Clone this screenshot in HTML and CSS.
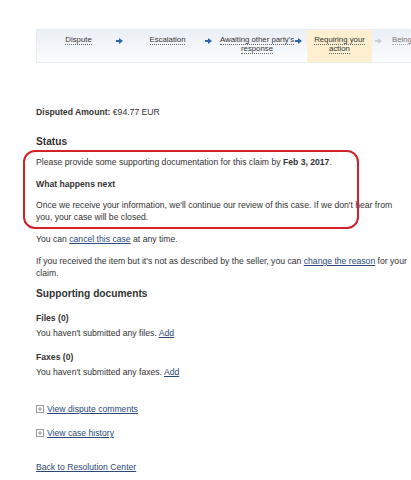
FILE: index.html
```html
<!DOCTYPE html>
<html>
<head>
    <title>Case Details</title>
    <meta name="viewport" content="width=device-width, initial-scale=1.0">
    <link rel="stylesheet" href="styles.css">
</head>
<body>
    <div class="page">
        <div class="steps">
            <div class="step step-dispute"><span class="step-label">Dispute</span></div>
            <div class="step-arrow">
                <svg width="7" height="6" viewBox="0 0 7 6"><path d="M0 2H3V0L7 3L3 6V4H0Z"/></svg>
            </div>
            <div class="step step-escalation"><span class="step-label">Escalation</span></div>
            <div class="step-arrow">
                <svg width="7" height="6" viewBox="0 0 7 6"><path d="M0 2H3V0L7 3L3 6V4H0Z"/></svg>
            </div>
            <div class="step step-awaiting"><span class="step-label">Awaiting other party's<br>response</span></div>
            <div class="step-arrow">
                <svg width="7" height="6" viewBox="0 0 7 6"><path d="M0 2H3V0L7 3L3 6V4H0Z"/></svg>
            </div>
            <div class="step step-current"><span class="step-label">Requiring your<br>action</span></div>
            <div class="step-arrow muted">
                <svg width="7" height="6" viewBox="0 0 7 6"><path d="M0 2H3V0L7 3L3 6V4H0Z"/></svg>
            </div>
            <div class="step step-next"><span class="step-label">Being resolved</span></div>
        </div>

        <p class="amount"><b>Disputed Amount:</b> €94.77 EUR</p>

        <h2 class="section-title status-title">Status</h2>

        <!-- highlighted notice -->
        <div class="notice">
            <p class="notice-deadline">Please provide some supporting documentation for this claim by <b>Feb 3, 2017</b>.</p>
            <h3 class="notice-title">What happens next</h3>
            <p class="notice-text">Once we receive your information, we'll continue our review of this case. If we don't hear from you, your case will be closed.</p>
        </div>

        <p class="note">You can <a href="#">cancel this case</a> at any time.</p>
        <p class="note">If you received the item but it's not as described by the seller, you can <a href="#">change the reason</a> for your claim.</p>

        <h2 class="section-title docs-title">Supporting documents</h2>

        <div class="doc-group">
            <h4 class="doc-label">Files (0)</h4>
            <p class="doc-text">You haven't submitted any files. <a href="#">Add</a></p>
        </div>
        <div class="doc-group">
            <h4 class="doc-label">Faxes (0)</h4>
            <p class="doc-text">You haven't submitted any faxes. <a href="#">Add</a></p>
        </div>

        <ul class="toggles">
            <li>
                <svg class="expand-icon" width="8" height="8" viewBox="0 0 8 8"><rect x="0.5" y="0.5" width="7" height="7"/><path d="M2 4H6M4 2V6"/></svg>
                <a href="#">View dispute comments</a>
            </li>
            <li>
                <svg class="expand-icon" width="8" height="8" viewBox="0 0 8 8"><rect x="0.5" y="0.5" width="7" height="7"/><path d="M2 4H6M4 2V6"/></svg>
                <a href="#">View case history</a>
            </li>
        </ul>

        <a href="#" class="back-link">Back to Resolution Center</a>
    </div>
</body>
</html>
```

FILE: styles.css
```css
* {
    box-sizing: border-box;
}

body {
    margin: 0;
    background: #fff;
    color: #333;
    font-family: "Liberation Sans", Arial, sans-serif;
    font-size: 8.65px;
    line-height: 12px;
    overflow: hidden;
}

a {
    color: #2b4a78;
    text-decoration: underline;
}

.page {
    padding: 29px 3px 0 36px;
}

/* Progress steps */
.steps {
    display: flex;
    width: 420px;
    height: 34px;
    background: linear-gradient(#eaeff6, #fcfdfe);
    border: 1px solid #e9ecf0;
    font-size: 7.8px;
    line-height: 9px;
    color: #333;
}

.step {
    flex: none;
    padding-top: 5px;
    text-align: center;
    white-space: nowrap;
}

.step-label {
    border-bottom: 1px dotted #666;
}

.step-dispute {
    width: 78px;
    padding-left: 5px;
}

.step-escalation {
    width: 81px;
    padding-left: 8px;
}

.step-awaiting {
    width: 82px;
    padding-left: 8px;
}

.step-current {
    width: 65px;
    margin-left: 5px;
    background: #fdefcf;
}

.step-next {
    padding-left: 10px;
    text-align: left;
    color: #777;
}

.step-next .step-label {
    border-bottom-color: #aaa;
}

.step-arrow {
    flex: none;
    width: 8px;
    padding-top: 8px;
    display: flex;
    justify-content: center;
}

.step-arrow svg {
    fill: #2f67a8;
}

.step-arrow.muted {
    margin-left: 2px;
}

.step-arrow.muted svg {
    fill: #c9cdd3;
}

/* Content */
.amount {
    margin: 43px 0 0;
}

.section-title {
    margin: 0;
    font-size: 10.2px;
    line-height: 13px;
    font-weight: bold;
}

.status-title {
    margin-top: 17px;
}

.notice {
    position: relative;
    margin-top: 8px;
}

.notice::after {
    content: "";
    position: absolute;
    top: -6px;
    left: -13px;
    right: 49px;
    bottom: -6px;
    border: 2.5px solid #d3202a;
    border-radius: 12px;
}

.notice-deadline {
    margin: 0;
}

.notice-title {
    margin: 10px 0 0;
    font-size: 8.65px;
    font-weight: bold;
}

.notice-text {
    margin: 9px 0 0;
}

.note {
    margin: 10px 0 0;
}

.docs-title {
    margin-top: 8px;
}

.doc-group {
    margin-top: 12px;
}

.doc-label {
    margin: 0;
    font-size: 8.65px;
    font-weight: bold;
}

.doc-text {
    margin: 3px 0 0;
}

.toggles {
    list-style: none;
    margin: 25px 0 0;
    padding: 0;
}

.toggles li {
    display: flex;
    align-items: center;
    gap: 3px;
}

.toggles li + li {
    margin-top: 12px;
}

.expand-icon {
    fill: none;
    stroke: #999;
    stroke-width: 1;
}

.back-link {
    display: block;
    margin-top: 22px;
}
```
